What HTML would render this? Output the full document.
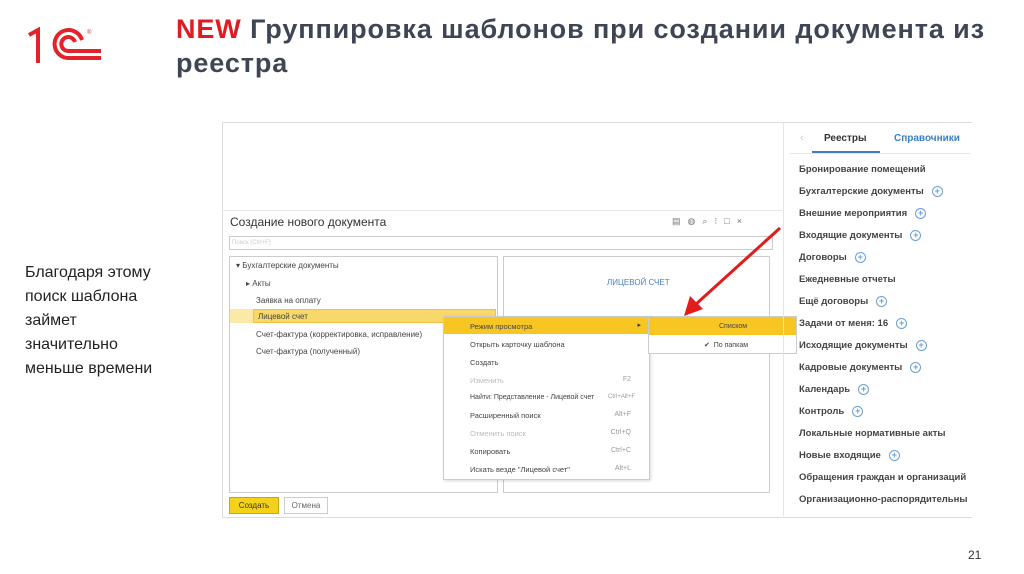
<html><head><style>
body{margin:0;width:1024px;height:574px;background:#fff;font-family:"Liberation Sans",sans-serif;position:relative;overflow:hidden}
.a{position:absolute}
.t{font-size:27px;letter-spacing:0.9px;font-weight:bold;color:#3e4654;line-height:34px}
.s{font-size:8px;color:#444;white-space:nowrap}
.r{font-size:10px;color:#333;font-weight:bold;white-space:nowrap}
.pl{display:inline-block;width:9px;height:9px;border:1px solid #6a9fd8;border-radius:50%;color:#6a9fd8;font-size:9px;line-height:9px;text-align:center;margin-left:8px;vertical-align:middle}
.mi{position:absolute;left:26px;font-size:7.5px;color:#444;white-space:nowrap}
.k{position:absolute;right:18px;font-size:7px;color:#999}
</style></head><body>
<svg class="a" style="left:25px;top:25px" width="80" height="42" viewBox="0 0 80 42">
<g fill="none" stroke="#e2232a" stroke-width="4">
<path d="M4 10 L13 5 L13 37"/>
<path d="M57 15 A14 14 0 1 0 44 33 L76 33"/>
<path d="M50 17 A7 7 0 1 0 44 26 L76 26"/>
</g><path d="M9 6 L15 2 L15 38 L11 38 L11 9 Z" fill="#e2232a"/><text x="62" y="9" font-size="6" fill="#e2232a">®</text></svg>
<div class="a t" style="left:176px;top:12px"><span style="color:#e01b22">NEW</span> Группировка шаблонов при создании документа из<br>реестра</div>
<div class="a" style="left:25px;top:261px;font-size:16px;line-height:24px;color:#222">Благодаря этому<br>поиск шаблона<br>займет<br>значительно<br>меньше времени</div>
<div class="a" style="left:968px;top:548px;font-size:12px;color:#333">21</div>
<div class="a" style="left:222px;top:122px;width:749px;height:394px;border:1px solid #ddd;border-right:none"></div>
<div class="a" style="left:222px;top:210px;width:560px;height:306px;border-top:1px solid #e5e5e5"></div>
<div class="a" style="left:230px;top:215px;font-size:12px;color:#333">Создание нового документа</div>
<div class="a" style="left:672px;top:216px;font-size:9px;color:#777;letter-spacing:7px">▤◍⌕⁝□×</div>
<div class="a" style="left:229px;top:236px;width:540px;height:12px;border:1px solid #ccc;font-size:6px;line-height:12px;color:#ccc;padding-left:2px">Поиск (Ctrl+F)</div>
<div class="a" style="left:229px;top:256px;width:267px;height:235px;border:1px solid #ccc"></div>
<div class="a" style="left:503px;top:256px;width:265px;height:235px;border:1px solid #ccc"></div>
<div class="a s" style="left:236px;top:261px">▾ Бухгалтерские документы</div>
<div class="a s" style="left:246px;top:279px">▸ Акты</div>
<div class="a s" style="left:256px;top:296px">Заявка на оплату</div>
<div class="a" style="left:230px;top:309px;width:266px;height:14px;background:#fce9a8"></div>
<div class="a" style="left:253px;top:309px;width:243px;height:14px;background:#f9d86b;border:1px solid #f0c040;box-sizing:border-box"></div>
<div class="a s" style="left:258px;top:312px">Лицевой счет</div>
<div class="a s" style="left:256px;top:330px">Счет-фактура (корректировка, исправление)</div>
<div class="a s" style="left:256px;top:347px">Счет-фактура (полученный)</div>
<div class="a" style="left:607px;top:278px;font-size:8px;color:#4a7fc0">ЛИЦЕВОЙ СЧЕТ</div>
<div class="a" style="left:443px;top:316px;width:205px;height:162px;background:#fff;border:1px solid #ccc;box-shadow:1px 1px 3px rgba(0,0,0,.15)">
<div style="position:absolute;left:0;top:0;width:205px;height:17px;background:#f7c623"></div>
<div class="mi" style="top:5px">Режим просмотра</div><div class="k" style="top:4px;color:#333;right:8px">▸</div>
<div class="mi" style="top:23px">Открыть карточку шаблона</div>
<div class="mi" style="top:41px">Создать</div>
<div class="mi" style="top:59px;color:#bbb">Изменить</div><div class="k" style="top:59px">F2</div>
<div class="mi" style="top:77px;font-size:7px">Найти: Представление - Лицевой счет</div><div class="k" style="top:77px;font-size:6px;right:14px">Ctrl+Alt+F</div>
<div class="mi" style="top:94px">Расширенный поиск</div><div class="k" style="top:94px">Alt+F</div>
<div class="mi" style="top:112px;color:#bbb">Отменить поиск</div><div class="k" style="top:112px">Ctrl+Q</div>
<div class="mi" style="top:130px">Копировать</div><div class="k" style="top:130px">Ctrl+C</div>
<div class="mi" style="top:148px">Искать везде "Лицевой счет"</div><div class="k" style="top:148px">Alt+L</div>
</div>
<div class="a" style="left:648px;top:316px;width:147px;height:36px;background:#fff;border:1px solid #ccc">
<div style="position:absolute;left:0;top:0;width:147px;height:18px;background:#f7c623"></div>
<div class="mi" style="top:6px;left:70px;font-size:7px">Списком</div>
<div class="mi" style="top:24px;left:55px;font-size:7px">✔ &nbsp;По папкам</div></div>
<div class="a" style="left:229px;top:497px;width:48px;height:15px;background:#f5d21a;border:1px solid #c9a800;font-size:8px;line-height:15px;text-align:center;color:#333">Создать</div>
<div class="a" style="left:284px;top:497px;width:42px;height:15px;border:1px solid #ccc;font-size:8px;line-height:15px;text-align:center;color:#666">Отмена</div>
<div class="a" style="left:783px;top:122px;width:1px;height:394px;background:#e5e5e5"></div>
<div class="a" style="left:800px;top:132px;color:#ccc;font-size:11px">‹</div>
<div class="a r" style="left:824px;top:133px">Реестры</div>
<div class="a r" style="left:894px;top:133px;color:#3a7fc8">Справочники</div>
<div class="a" style="left:812px;top:151px;width:68px;height:2px;background:#3a7fc8"></div>
<div class="a" style="left:790px;top:153px;width:180px;height:1px;background:#e5e5e5"></div>
<div class="a r" style="left:799px;top:159px;line-height:22px;font-size:9.5px;color:#444">Бронирование помещений<br>Бухгалтерские документы<span class="pl">+</span><br>Внешние мероприятия<span class="pl">+</span><br>Входящие документы<span class="pl">+</span><br>Договоры<span class="pl">+</span><br>Ежедневные отчеты<br>Ещё договоры<span class="pl">+</span><br>Задачи от меня: 16<span class="pl">+</span><br>Исходящие документы<span class="pl">+</span><br>Кадровые документы<span class="pl">+</span><br>Календарь<span class="pl">+</span><br>Контроль<span class="pl">+</span><br>Локальные нормативные акты<br>Новые входящие<span class="pl">+</span><br>Обращения граждан и организаций<br>Организационно-распорядительны</div>
<svg class="a" style="left:0;top:0" width="1024" height="574"><line x1="780" y1="228" x2="695" y2="305" stroke="#e21b1b" stroke-width="3"/><polygon points="684,316 690,296 703,309" fill="#e21b1b"/></svg>
</body></html>
